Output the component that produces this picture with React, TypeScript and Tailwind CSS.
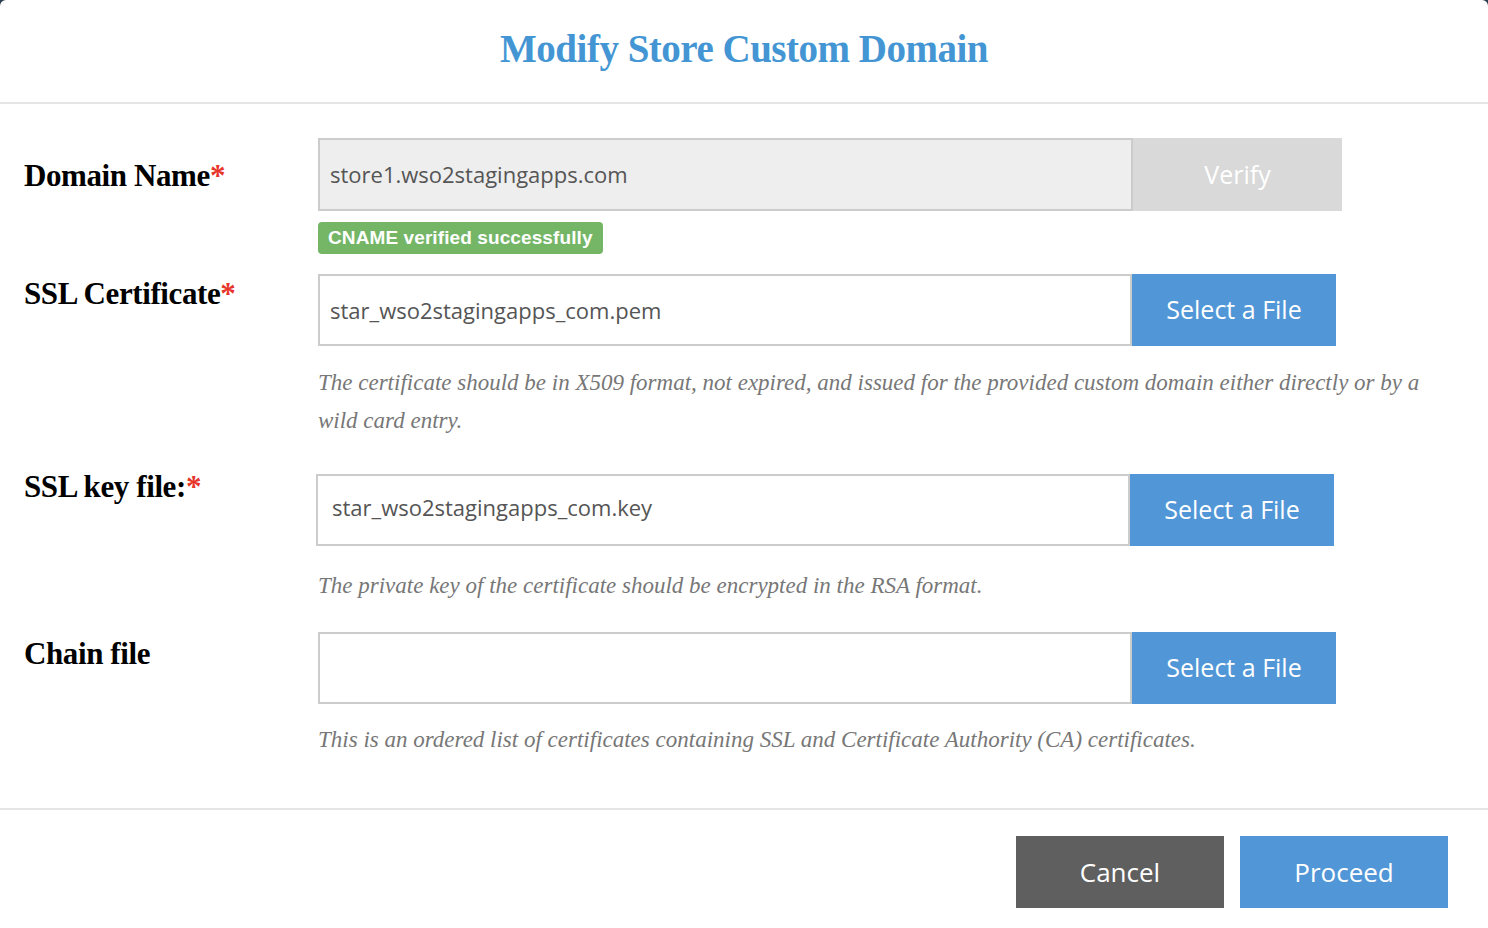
const openSans = "font-['Open_Sans',sans-serif]";
const serif = "font-['Liberation_Serif','Times_New_Roman',serif]";

function Label({ text, required, offset }: { text: string; required?: boolean; offset: string }) {
  return (
    <div className={`w-[318px] shrink-0 pl-6 ${offset}`}>
      <span className={`${serif} text-[31px] leading-[32px] font-bold text-black tracking-[-0.4px]`}>
        {text}
        {required && <span className="text-[#e8352b]">*</span>}
      </span>
    </div>
  );
}

function FileField({ value, shift }: { value: string; shift?: string }) {
  return (
    <div className={`flex h-[72px] w-[1018px] ${shift ?? ""}`}>
      <div className={`flex-1 border-2 border-[#cccccc] bg-white flex items-center px-[10px] ${openSans} text-[22px] text-[#555555]`}>
        {value}
      </div>
      <button className={`w-[204px] bg-[#5196d6] text-white ${openSans} text-[25px]`}>Select a File</button>
    </div>
  );
}

function Help({ children, mt }: { children: React.ReactNode; mt: string }) {
  return (
    <p className={`${serif} italic text-[23px] leading-[38px] text-[#777777] ${mt} pr-[50px]`}>{children}</p>
  );
}

export default function App() {
  return (
    <div className="h-[928px] w-[1488px] bg-[#2c3e50]">
      <div className="h-full bg-white rounded-t-[6px] flex flex-col">
        {/* Header */}
        <div className="h-[104px] border-b-2 border-[#e5e5e5] flex items-center justify-center">
          <h1 className={`${serif} font-bold text-[39px] text-[#4396d3] tracking-[-0.5px] -mt-[4px]`}>Modify Store Custom Domain</h1>
        </div>

        {/* Body */}
        <div className="flex-1 pt-[34px]">
          {/* Domain Name */}
          <div className="flex">
            <Label text="Domain Name" required offset="pt-[22px]" />
            <div>
              <div className="flex h-[73px] w-[1024px]">
                <div className={`w-[815px] border-2 border-[#cccccc] bg-[#eeeeee] flex items-center px-[10px] ${openSans} text-[22px] text-[#555555]`}>
                  store1.wso2stagingapps.com
                </div>
                <button className={`flex-1 bg-[#d9d9d9] text-white ${openSans} text-[25px]`}>Verify</button>
              </div>
              <div className={`mt-[11px] inline-flex h-[32px] items-center rounded-[4px] bg-[#74b566] px-[10px] font-['Liberation_Sans',Arial,sans-serif] font-bold text-[19px] tracking-[0.1px] text-white`}>
                CNAME verified successfully
              </div>
            </div>
          </div>

          {/* SSL Certificate */}
          <div className="flex mt-[20px]">
            <Label text="SSL Certificate" required offset="pt-[4px]" />
            <div className="flex-1">
              <FileField value="star_wso2stagingapps_com.pem" />
              <Help mt="mt-[18px]">
                The certificate should be in X509 format, not expired, and issued for the provided custom domain either directly or by a wild card entry.
              </Help>
            </div>
          </div>

          {/* SSL key file */}
          <div className="flex mt-[34px]">
            <Label text="SSL key file:" required offset="-mt-[3px]" />
            <div className="flex-1">
              <FileField value="star_wso2stagingapps_com.key" shift="-ml-[2px] [&>div]:pb-[6px] [&>div]:pl-[14px]" />
              <Help mt="mt-[21px]">The private key of the certificate should be encrypted in the RSA format.</Help>
            </div>
          </div>

          {/* Chain file */}
          <div className="flex mt-[27px]">
            <Label text="Chain file" offset="pt-[6px]" />
            <div className="flex-1">
              <div className="h-[74px]">
                <FileField value="" />
              </div>
              <Help mt="mt-[15px]">This is an ordered list of certificates containing SSL and Certificate Authority (CA) certificates.</Help>
            </div>
          </div>
        </div>

        {/* Footer */}
        <div className="h-[120px] border-t-2 border-[#e5e5e5] flex items-start justify-end gap-4 pt-[26px] pr-[40px]">
          <button className={`w-[208px] h-[72px] bg-[#5f5f5f] text-white ${openSans} text-[26px]`}>Cancel</button>
          <button className={`w-[208px] h-[72px] bg-[#5196d6] text-white ${openSans} text-[26px]`}>Proceed</button>
        </div>
      </div>
    </div>
  );
}
